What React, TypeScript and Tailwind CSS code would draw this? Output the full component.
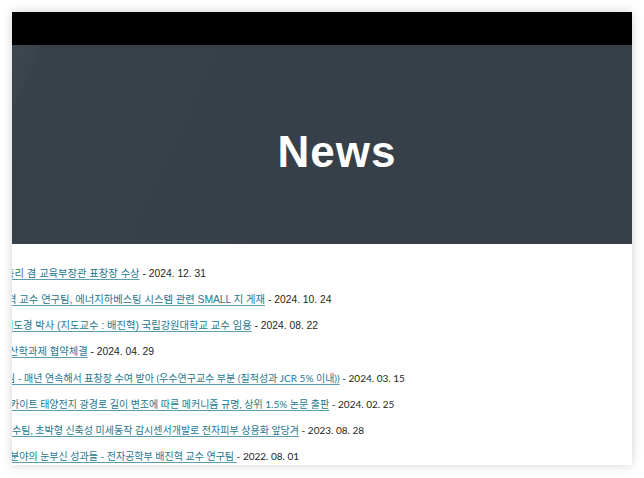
import React from 'react'

interface NewsItem {
  title: string;
  date: string;
  shift: string;
  lato?: boolean;
}

const items: NewsItem[] = [
  { title: "총리 겸 교육부장관 표창장 수상", date: "2024. 12. 31", shift: "ml-[-7px]" },
  { title: "혁 교수 연구팀, 에너지하베스팅 시스템 관련 SMALL 지 게재", date: "2024. 10. 24", shift: "ml-[-5px]" },
  { title: "이도경 박사 (지도교수 : 배진혁) 국립강원대학교 교수 임용", date: "2024. 08. 22", shift: "ml-[-8px]" },
  { title: "산학과제 협약체결", date: "2024. 04. 29", shift: "ml-[-3px]" },
  { title: "팀 - 매년 연속해서 표창장 수여 받아 (우수연구교수 부분 (질적성과 JCR 5% 이내))", date: "2024. 03. 15", shift: "ml-[-6px]", lato: true },
  { title: "카이트 태양전지 광경로 길이 변조에 따른 메커니즘 규명, 상위 1.5% 논문 출판", date: "2024. 02. 25", shift: "ml-[-2px]", lato: true },
  { title: "수팀, 초박형 신축성 미세동작 감시센서개발로 전자피부 상용화 앞당겨", date: "2023. 08. 28", shift: "ml-0", lato: true },
  { title: "분야의 눈부신 성과들 - 전자공학부 배진혁 교수 연구팀 ", date: "2022. 08. 01", shift: "ml-[-2px]", lato: true },
]

function NewsRow({ title, date, shift, lato }: NewsItem) {
  const font = lato
    ? "text-[10px] font-['Lato','Noto_Sans_CJK_KR',sans-serif]"
    : "text-[10.3px] font-['Liberation_Sans','Noto_Sans_CJK_KR',sans-serif]"
  return (
    <li className={`h-[26px] leading-[26px] whitespace-nowrap text-[#1e1e1e] ${font} ${shift}`}>
      <a href="#" className="text-[#25768f] underline underline-offset-2 decoration-[#5a9cb0]">{title}</a>
      <span> - {date}</span>
    </li>
  )
}

export default function App() {
  return (
    <div className="min-h-[478px] bg-white p-[12px]">
      <div className="w-[620px] h-[453px] overflow-hidden bg-white shadow-[0_0_10px_rgba(0,0,0,0.18)]">
        <div className="h-[33px] bg-black" />
        <section className="h-[199px] flex items-center justify-center pl-[30px] pt-[14px] bg-[#37414a] bg-[linear-gradient(115deg,#3d474f_0%,#3a444c_4%,#37414a_4.5%,#363f47_100%)]">
          <h1 className="text-white text-[44px] font-bold tracking-[1px] font-['Liberation_Sans',Arial,sans-serif]">News</h1>
        </section>
        <ul className="pt-[17px]">
          {items.map((it, i) => (
            <NewsRow key={i} {...it} />
          ))}
        </ul>
      </div>
    </div>
  )
}
